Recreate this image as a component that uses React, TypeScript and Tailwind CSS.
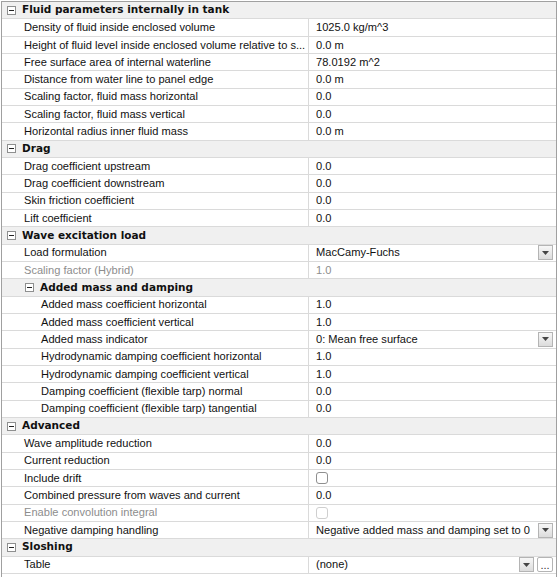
import React from "react";

type Kind = "text" | "dropdown" | "check" | "table";

type Item =
  | { type: "group"; label: string; level: number }
  | {
      type: "row";
      label: string;
      value?: string;
      level: number;
      kind?: Kind;
      disabled?: boolean;
    };

const items: Item[] = [
  { type: "group", label: "Fluid parameters internally in tank", level: 0 },
  { type: "row", label: "Density of fluid inside enclosed volume", value: "1025.0 kg/m^3", level: 0 },
  { type: "row", label: "Height of fluid level inside enclosed volume relative to s...", value: "0.0 m", level: 0 },
  { type: "row", label: "Free surface area of internal waterline", value: "78.0192 m^2", level: 0 },
  { type: "row", label: "Distance from water line to panel edge", value: "0.0 m", level: 0 },
  { type: "row", label: "Scaling factor, fluid mass horizontal", value: "0.0", level: 0 },
  { type: "row", label: "Scaling factor, fluid mass vertical", value: "0.0", level: 0 },
  { type: "row", label: "Horizontal radius inner fluid mass", value: "0.0 m", level: 0 },
  { type: "group", label: "Drag", level: 0 },
  { type: "row", label: "Drag coefficient upstream", value: "0.0", level: 0 },
  { type: "row", label: "Drag coefficient downstream", value: "0.0", level: 0 },
  { type: "row", label: "Skin friction coefficient", value: "0.0", level: 0 },
  { type: "row", label: "Lift coefficient", value: "0.0", level: 0 },
  { type: "group", label: "Wave excitation load", level: 0 },
  { type: "row", label: "Load formulation", value: "MacCamy-Fuchs", level: 0, kind: "dropdown" },
  { type: "row", label: "Scaling factor (Hybrid)", value: "1.0", level: 0, disabled: true },
  { type: "group", label: "Added mass and damping", level: 1 },
  { type: "row", label: "Added mass coefficient horizontal", value: "1.0", level: 1 },
  { type: "row", label: "Added mass coefficient vertical", value: "1.0", level: 1 },
  { type: "row", label: "Added mass indicator", value: "0: Mean free surface", level: 1, kind: "dropdown" },
  { type: "row", label: "Hydrodynamic damping coefficient horizontal", value: "1.0", level: 1 },
  { type: "row", label: "Hydrodynamic damping coefficient vertical", value: "1.0", level: 1 },
  { type: "row", label: "Damping coefficient (flexible tarp) normal", value: "0.0", level: 1 },
  { type: "row", label: "Damping coefficient (flexible tarp) tangential", value: "0.0", level: 1 },
  { type: "group", label: "Advanced", level: 0 },
  { type: "row", label: "Wave amplitude reduction", value: "0.0", level: 0 },
  { type: "row", label: "Current reduction", value: "0.0", level: 0 },
  { type: "row", label: "Include drift", level: 0, kind: "check" },
  { type: "row", label: "Combined pressure from waves and current", value: "0.0", level: 0 },
  { type: "row", label: "Enable convolution integral", level: 0, kind: "check", disabled: true },
  { type: "row", label: "Negative damping handling", value: "Negative added mass and damping set to 0", level: 0, kind: "dropdown" },
  { type: "group", label: "Sloshing", level: 0 },
  { type: "row", label: "Table", value: "(none)", level: 0, kind: "table" },
];

function MinusBox() {
  return (
    <span className="flex h-[9px] w-[9px] shrink-0 items-center justify-center border border-[#8e8f8f] bg-white">
      <span className="h-px w-[5px] bg-[#222]" />
    </span>
  );
}

function DropButton() {
  return (
    <span className="flex h-[15px] w-[15px] shrink-0 items-center justify-center border border-[#b4b4b4] bg-gradient-to-b from-[#f7f7f7] to-[#dcdcdc]">
      <svg width="7" height="4" viewBox="0 0 7 4">
        <path d="M0 0h7L3.5 4z" fill="#444" />
      </svg>
    </span>
  );
}

function Value({ item }: { item: Extract<Item, { type: "row" }> }) {
  const color = item.disabled ? "text-[#8d8d8d]" : "text-[#111]";
  if (item.kind === "check") {
    return (
      <div className="flex h-full items-center pl-[7px]">
        <span
          className={
            item.disabled
              ? "h-[12px] w-[12px] rounded-[3px] border border-[#cfcfcf] bg-white"
              : "h-[12px] w-[12px] rounded-[3px] border border-[#8f8f8f] bg-white"
          }
        />
      </div>
    );
  }
  return (
    <div className="flex h-full items-center pl-[7px] pr-[3px]">
      <span className={`min-w-0 flex-1 overflow-hidden whitespace-nowrap ${color}`}>{item.value}</span>
      {item.kind === "dropdown" && <DropButton />}
      {item.kind === "table" && (
        <>
          <DropButton />
          <span className="ml-[3px] flex h-[15px] w-[16px] items-end justify-center rounded-[2px] border border-[#b4b4b4] bg-white pb-[2px] text-[11px] leading-[8px] text-[#333]">
            ...
          </span>
        </>
      )}
    </div>
  );
}

export default function App() {
  return (
    <div className="h-[577px] w-[558px] overflow-hidden bg-white pl-px pt-px font-['Liberation_Sans',Arial,sans-serif] text-[11.1px]">
      <div className="h-[600px] w-[556px] border-l border-t border-r border-[#a0a0a0]">
        {items.map((item, i) =>
          item.type === "group" ? (
            <div
              key={i}
              className="flex h-[17.34px] items-center border-b border-[#dadada] bg-[#f0f0f0]"
              style={{ paddingLeft: 5 + item.level * 18 }}
            >
              <MinusBox />
              <span className="ml-[6px] font-['DejaVu_Sans',sans-serif] text-[10.5px] font-bold text-[#111]">
                {item.label}
              </span>
            </div>
          ) : (
            <div key={i} className="flex h-[17.34px] border-b border-[#dadada]">
              <div
                className={`flex w-[307px] shrink-0 items-center overflow-hidden whitespace-nowrap border-r border-[#dadada] ${
                  item.disabled ? "text-[#8d8d8d]" : "text-[#111]"
                }`}
                style={{ paddingLeft: 22 + item.level * 17 }}
              >
                <span>{item.label}</span>
              </div>
              <div className="min-w-0 flex-1">
                <Value item={item} />
              </div>
            </div>
          )
        )}
      </div>
    </div>
  );
}
